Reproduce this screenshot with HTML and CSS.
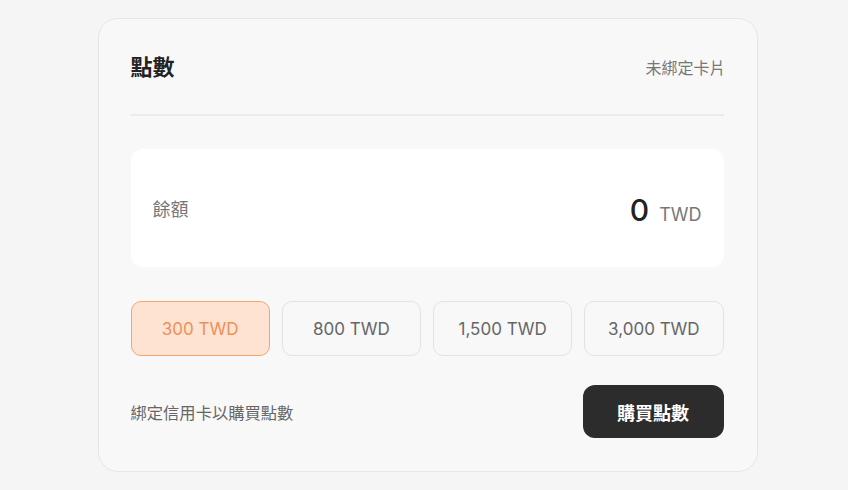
FILE: index.html
```html
<!DOCTYPE html>
<html lang="zh-Hant">
<head>
<meta charset="utf-8">
<link rel="stylesheet" href="styles.css">
</head>
<body>
<div class="page">
  <section class="card">
    <header class="card-head">
      <h2 class="title">點數</h2>
      <span class="status">未綁定卡片</span>
    </header>
    <div class="balance">
      <span class="balance-label">餘額</span>
      <span class="balance-value"><span class="amount">0</span><span class="unit">TWD</span></span>
    </div>
    <div class="options">
      <button class="opt selected">300 TWD</button>
      <button class="opt">800 TWD</button>
      <button class="opt">1,500 TWD</button>
      <button class="opt">3,000 TWD</button>
    </div>
    <footer class="card-foot">
      <span class="hint">綁定信用卡以購買點數</span>
      <button class="buy">購買點數</button>
    </footer>
  </section>
</div>
</body>
</html>
```

FILE: styles.css
```css
* { box-sizing: border-box; }
html, body {
  margin: 0;
  padding: 0;
  background: #f5f5f5;
  font-family: Inter, "Noto Sans CJK TC", sans-serif;
}
.page {
  display: flex;
  justify-content: center;
  padding-top: 18px;
  padding-left: 7px;
}
.card {
  width: 660px;
  background: #f8f8f8;
  border: 1px solid #e6e6e6;
  border-radius: 20px;
  padding: 32px 33px 33px 32px;
  display: flex;
  flex-direction: column;
}
.card-head {
  display: flex;
  justify-content: space-between;
  align-items: center;
  height: 65px;
  padding-bottom: 31px;
  border-bottom: 2px solid #ebebeb;
}
.title {
  margin: 0;
  font-size: 22px;
  font-weight: 700;
  color: #222;
  line-height: 34px;
}
.status {
  font-size: 16px;
  color: #777;
  margin-right: -2px;
}
.balance {
  margin-top: 33px;
  height: 118px;
  background: #fff;
  border-radius: 12px;
  padding: 0 22px;
  display: flex;
  justify-content: space-between;
  align-items: center;
}
.balance-label {
  font-size: 18px;
  color: #777;
}
.balance-value {
  display: flex;
  align-items: baseline;
  gap: 10px;
  padding-top: 4px;
}
.amount {
  font-size: 30px;
  font-weight: 500;
  color: #222;
}
.unit {
  font-size: 18px;
  color: #777;
}
.options {
  margin-top: 34px;
  display: grid;
  grid-template-columns: repeat(4, 1fr);
  gap: 12px;
}
.opt {
  height: 55px;
  border: 1px solid #e3e3e3;
  border-radius: 10px;
  background: #f8f8f8;
  font-family: inherit;
  font-size: 17px;
  color: #666;
  padding: 0;
}
.opt.selected {
  background: #ffe3d2;
  border-color: #f5a470;
  color: #ef8f58;
}
.card-foot {
  margin-top: 29px;
  display: flex;
  justify-content: space-between;
  align-items: center;
}
.hint {
  font-size: 16.3px;
  color: #666;
}
.buy {
  width: 141px;
  height: 53px;
  border: none;
  border-radius: 12px;
  background: #2c2c2c;
  color: #fff;
  font-family: inherit;
  font-size: 18px;
  font-weight: 700;
  padding: 0;
}
```
